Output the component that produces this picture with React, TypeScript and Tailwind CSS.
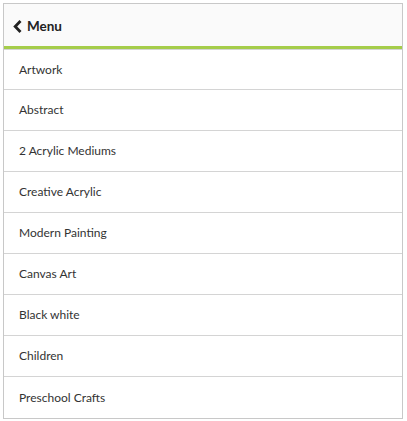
import React from "react";

const items = [
  "Artwork",
  "Abstract",
  "2 Acrylic Mediums",
  "Creative Acrylic",
  "Modern Painting",
  "Canvas Art",
  "Black white",
  "Children",
  "Preschool Crafts",
];

export default function App() {
  return (
    <div className="p-[3px] font-['Lato',sans-serif]">
      <div className="w-[400px] border border-[#c8c8c8] bg-white">
        <div className="flex h-[45px] items-center gap-[5px] border-b-[3px] border-[#a5cd4a] bg-[#fafafa] pt-[2px] pl-[9px]">
          <svg width="9" height="13" viewBox="0 0 9 13" className="shrink-0">
            <path d="M7.5 1 L2.2 6.5 L7.5 12" fill="none" stroke="#222" strokeWidth="2.8" />
          </svg>
          <span className="text-[13.5px] font-bold text-[#222]">Menu</span>
        </div>
        {items.map((item, i) => (
          <div
            key={item}
            className={`flex h-[41px] items-center pl-[15px] text-[12px] text-[#333] ${
              i === 0 ? "border-t border-[#d4d4d4]" : ""
            } ${i < items.length - 1 ? "border-b border-[#d4d4d4]" : "h-[40px]"}`}
          >
            {item}
          </div>
        ))}
      </div>
    </div>
  );
}
